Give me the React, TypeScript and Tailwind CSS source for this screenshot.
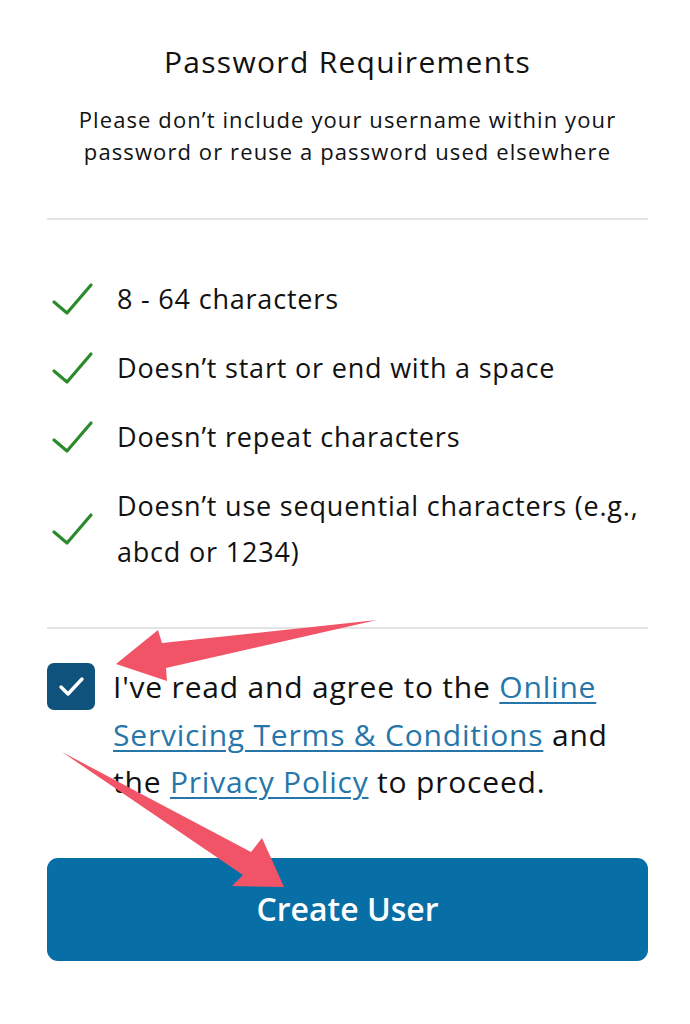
import React from 'react';

const requirements = [
  ['8 - 64 characters'],
  ['Doesn’t start or end with a space'],
  ['Doesn’t repeat characters'],
  ['Doesn’t use sequential characters (e.g.,', 'abcd or 1234)'],
];

function GreenCheck() {
  return (
    <svg width="50" height="40" viewBox="0 0 50 40" className="shrink-0">
      <path d="M7 23 L20 34 L44 6" fill="none" stroke="#2b8a2b" strokeWidth="3.2" strokeLinecap="round" strokeLinejoin="round" />
    </svg>
  );
}

function Arrows() {
  return (
    <svg className="absolute left-0 top-0 pointer-events-none" width="690" height="1024" viewBox="0 0 690 1024">
      <polygon points="116,664 158,630 162,643 377,620 166,668 167,681" fill="#f25467" />
      <polygon points="62,752 251,852 262,838 284,887 232,886 243,875" fill="#f25467" />
    </svg>
  );
}

export default function App() {
  return (
    <div className="relative w-[690px] h-[1024px] bg-white pl-[47px] pr-[42px] pt-[44px] text-[#111]" style={{ fontFamily: '"Open Sans", sans-serif' }}>
      <h1 className="text-center text-[30px] leading-[36px] font-normal tracking-[1.3px]">Password Requirements</h1>
      <p className="mt-[23px] text-center text-[22px] leading-[32px] tracking-[1.1px] whitespace-nowrap">
        Please don’t include your username within your
        <br />
        password or reuse a password used elsewhere
      </p>
      <div className="mt-[51px] h-[2px] bg-[#e4e4e4]" />

      <ul className="mt-[56px] flex flex-col gap-[23px]">
        {requirements.map((lines) => (
          <li key={lines[0]} className="flex items-center gap-[20px]">
            <GreenCheck />
            <span className="text-[27px] leading-[46px] tracking-[0.8px] whitespace-nowrap">
              {lines.map((l, i) => (
                <React.Fragment key={l}>
                  {i > 0 && <br />}
                  {l}
                </React.Fragment>
              ))}
            </span>
          </li>
        ))}
      </ul>

      <div className="mt-[52px] h-[2px] bg-[#e4e4e4]" />

      <div className="mt-[34px] flex items-start gap-[18px]">
        <div className="shrink-0 w-[48px] h-[47px] rounded-[7px] bg-[#0f537c] flex items-center justify-center">
          <svg width="30" height="24" viewBox="0 0 30 24">
            <path d="M5 12 L12 19 L26 4" fill="none" stroke="#fff" strokeWidth="3.4" strokeLinecap="round" strokeLinejoin="round" />
          </svg>
        </div>
        <p className="text-[30px] leading-[47.5px] tracking-[0.8px] whitespace-nowrap">
          I've read and agree to the{' '}
          <a href="#" className="text-[#2676aa] underline underline-offset-4 decoration-[1.5px]">Online</a>
          <br />
          <a href="#" className="text-[#2676aa] underline underline-offset-4 decoration-[1.5px]">Servicing Terms &amp; Conditions</a> and
          <br />
          the{' '}
          <a href="#" className="text-[#2676aa] underline underline-offset-4 decoration-[1.5px]">Privacy Policy</a> to proceed.
        </p>
      </div>

      <button className="mt-[52px] w-full h-[103px] rounded-[11px] bg-[#086ea6] text-white text-[32px] font-semibold">
        Create User
      </button>

      <Arrows />
    </div>
  );
}
